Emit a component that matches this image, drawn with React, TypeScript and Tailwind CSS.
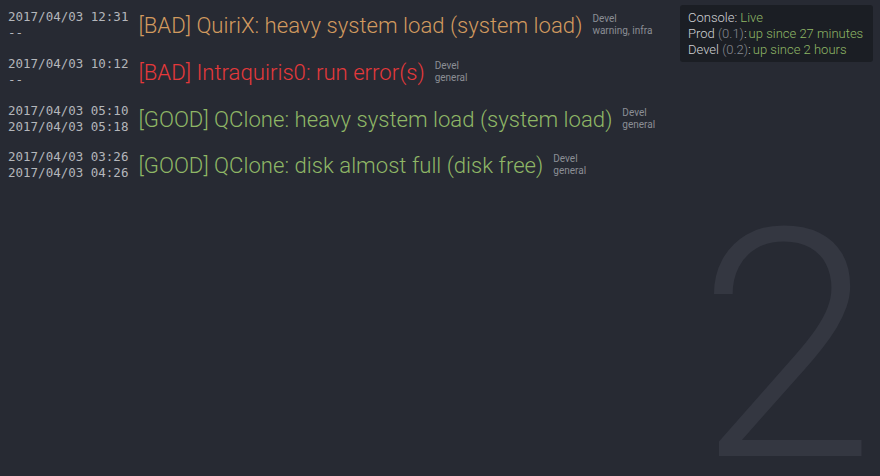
import React from "react";

type Row = {
  start: string;
  end: string;
  status: "BAD" | "GOOD";
  tone: "orange" | "red" | "green";
  title: string;
  env: string;
  tags: string;
};

const rows: Row[] = [
  { start: "2017/04/03 12:31", end: "--", status: "BAD", tone: "orange", title: "QuiriX: heavy system load (system load)", env: "Devel", tags: "warning, infra" },
  { start: "2017/04/03 10:12", end: "--", status: "BAD", tone: "red", title: "Intraquiris0: run error(s)", env: "Devel", tags: "general" },
  { start: "2017/04/03 05:10", end: "2017/04/03 05:18", status: "GOOD", tone: "green", title: "QClone: heavy system load (system load)", env: "Devel", tags: "general" },
  { start: "2017/04/03 03:26", end: "2017/04/03 04:26", status: "GOOD", tone: "green", title: "QClone: disk almost full (disk free)", env: "Devel", tags: "general" },
];

const toneClass: Record<Row["tone"], string> = {
  orange: "text-[#d29a5f]",
  red: "text-[#e5393b]",
  green: "text-[#8fb766]",
};

export default function App() {
  return (
    <div
      className="relative h-[476px] w-[880px] overflow-hidden bg-[#272a33]"
      style={{ fontFamily: "Roboto, 'Noto Sans', sans-serif" }}
    >
      <div
        className="pointer-events-none absolute bottom-[9px] right-[5px] select-none text-[320px] font-light leading-[240px] text-[#343741]"
        style={{ fontFamily: "Roboto, sans-serif" }}
      >
        2
      </div>

      <div className="relative flex flex-col pl-2 pt-[2px]">
        {rows.map((r, i) => (
          <div key={i} className="flex h-[46.7px] items-center gap-[10px]">
            <div
              className="flex flex-col text-[12.5px] leading-[16px] text-[#b4b6bb]"
              style={{ fontFamily: "'DejaVu Sans Mono', monospace" }}
            >
              <span>{r.start}</span>
              <span>{r.end}</span>
            </div>
            <div className={`whitespace-nowrap text-[22.15px] font-light leading-[28px] ${toneClass[r.tone]}`}>
              [{r.status}] {r.title}
            </div>
            <div className="flex flex-col text-[10px] leading-[12px] text-[#8b8e95]">
              <span>{r.env}</span>
              <span className="whitespace-nowrap">{r.tags}</span>
            </div>
          </div>
        ))}
      </div>

      <div className="absolute left-[680px] top-[5px] flex flex-col whitespace-nowrap rounded-[3px] bg-[#1b1e24] py-[4.5px] pl-2 pr-[10px] text-[13px] font-light leading-[16px] text-[#d0d2d5]">
        <div>
          Console: <span className="text-[#8fb766]">Live</span>
        </div>
        <div>
          Prod <span className="text-[#858890]">(0.1)</span>:<span className="ml-[2px] text-[#8fb766]">up since 27 minutes</span>
        </div>
        <div>
          Devel <span className="text-[#858890]">(0.2)</span>:<span className="ml-[2px] text-[#8fb766]">up since 2 hours</span>
        </div>
      </div>
    </div>
  );
}
